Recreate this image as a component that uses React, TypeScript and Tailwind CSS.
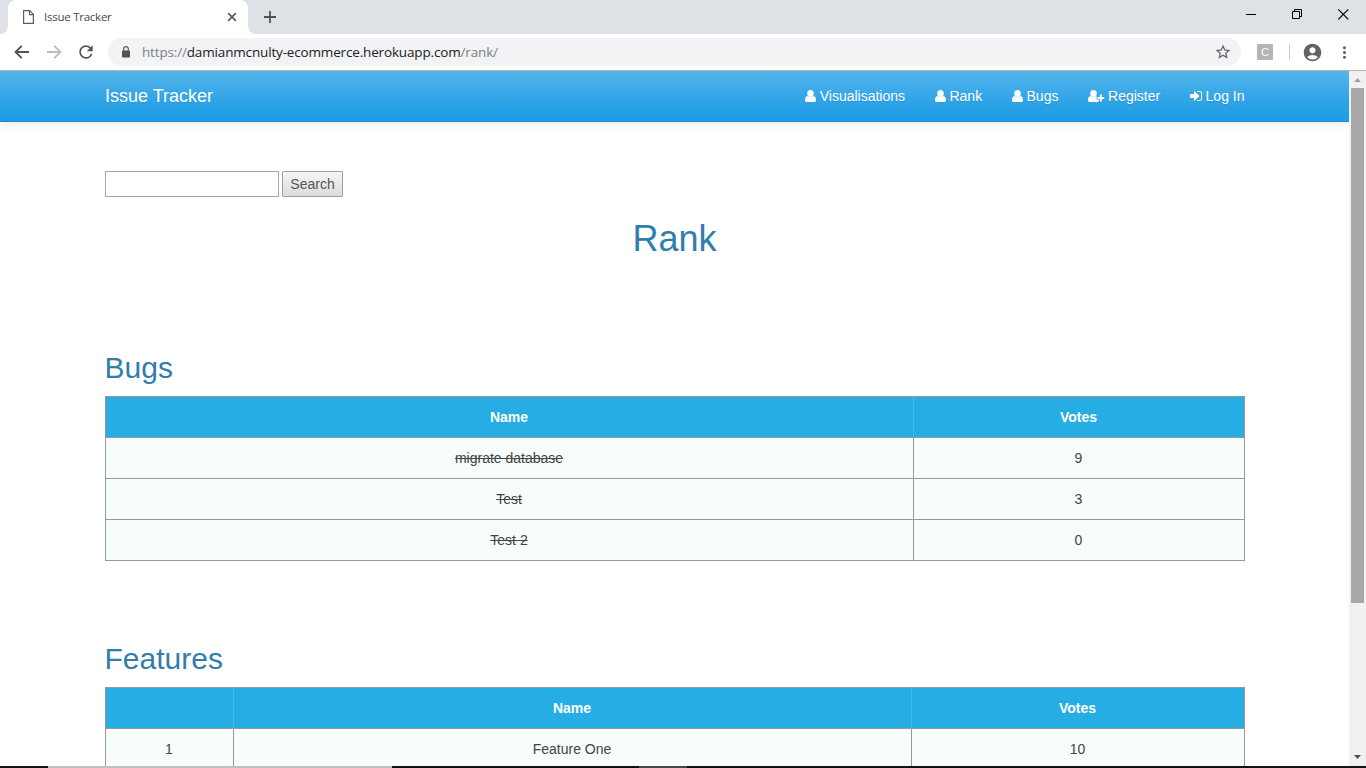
import { MdAccountCircle, MdLogin, MdMoreVert, MdRefresh, MdStarBorder } from "react-icons/md";

const PERSON =
  "M5.500.900a3.300 3.500 0 010 7a3.300 3.500 0 010-7zM2.500 7C.6 7.300 0 9.200 0 11.200C0 12.400.7 13 1.700 13H9.300C10.300 13 11 12.400 11 11.200C11 9.200 10.400 7.300 8.500 7C7 8.600 4 8.600 2.500 7Z";
const PERSON_PLUS =
  "M5.500.900a3.300 3.500 0 010 7a3.300 3.500 0 010-7zM2.500 7C.6 7.300 0 9.200 0 11.200C0 12.400.7 13 1.700 13H9.300Q10.400 13 10.900 12.300V10.400H9Q8.600 10.300 8.600 9.900V7.600Q8.600 7.200 8.900 7.100L8.500 7C7 8.600 4 8.600 2.500 7ZM11.900 5.600h2v2.400h2.300v2h-2.300v2.400h-2v-2.400h-2.400v-2h2.400z";
const SIGN_IN =
  "M1184 896q0 26-19 45l-544 544q-19 19-45 19t-45-19-19-45v-288h-448q-26 0-45-19t-19-45v-384q0-26 19-45t45-19h448v-288q0-26 19-45t45-19 45 19l544 544q19 19 19 45zm352-352v704q0 119-84.5 203.5t-203.5 84.5h-320q-13 0-22.5-9.5t-9.5-22.5q0-4-1-20t-.5-26.5 3-23.5 10-19.5 20.5-6.5h320q66 0 113-47t47-113v-704q0-66-47-113t-113-47h-312l-11.5-1-11.5-3-8-5.5-7-9-2-13.5q0-4-1-20t-.5-26.5 3-23.5 10-19.5 20.5-6.5h320q119 0 203.5 84.5t84.5 203.5z";

const links = [
  { label: "Visualisations", d: PERSON, w: 11, box: "0 0 11 14" },
  { label: "Rank", d: PERSON, w: 11, box: "0 0 11 14" },
  { label: "Bugs", d: PERSON, w: 11, box: "0 0 11 14" },
  { label: "Register", d: PERSON_PLUS, w: 16.2, box: "0 0 16.2 14" },
  { label: "Log In", d: SIGN_IN, w: 12, box: "0 0 1536 1792" },
];

const bugs = [
  { name: "migrate database", votes: 9 },
  { name: "Test", votes: 3 },
  { name: "Test 2", votes: 0 },
];

const th = "h-[41px] border-b border-b-[#999] bg-[#26ade4] p-0 pr-px font-bold text-white";
const thMid = "border-r border-r-[#48b9e8]";
const td = "h-[41px] border-b border-r border-[#999] bg-[#f7fdfa] p-0 pr-px";

function TabStrip() {
  return (
    <div className="flex h-[34px] shrink-0 bg-[#dee1e6]">
      <div className="flex w-2 items-end bg-white">
        <div className="h-full w-2 rounded-br-lg bg-[#dee1e6]" />
      </div>
      <div className="bg-[#dee1e6]">
        <div className="flex h-[34px] w-[240px] items-center rounded-t-lg bg-white pr-[11px] pl-[15px]">
          <svg width="11" height="14" viewBox="0 0 11 14" fill="none" stroke="#5a5d61" strokeWidth="1.2">
            <path d="M.6.6H6.8L10.4 4.4V13.4H.6zM6.5.6V4.7H10.4" />
          </svg>
          <span className="ml-[10px] flex-1 whitespace-nowrap font-['Open_Sans',sans-serif] text-[11.5px] tracking-[-0.25px] text-[#45494d]">Issue Tracker</span>
          <svg width="10" height="10" viewBox="0 0 10 10" stroke="#5a5d61" strokeWidth="1.7">
            <path d="M1.200 1.200l7.600 7.600M8.800 1.200l-7.600 7.600" />
          </svg>
        </div>
      </div>
      <div className="flex w-2 bg-white">
        <div className="h-full w-2 rounded-bl-lg bg-[#dee1e6]" />
      </div>
      <svg className="mt-[11px] ml-2" width="12" height="12" viewBox="0 0 12 12" stroke="#505357" strokeWidth="1.8">
        <path d="M6 0v12M0 6h12" />
      </svg>
      <svg className="mt-2 ml-auto" width="120" height="13" viewBox="0 0 120 13" fill="none" stroke="#000">
        <path d="M0 6.500h10M46.500 3.500h7v7h-7zM48.500 3.500v-2h7v7h-2" />
        <path d="M92.300 1.300l10 10M102.300 1.300l-10 10" strokeWidth="1.2" />
      </svg>
    </div>
  );
}

function Toolbar() {
  return (
    <div className="flex h-9 shrink-0 items-center text-[#5f6368]">
      <svg className="ml-[14px]" width="15" height="14" viewBox="0 0 15 14" fill="none" stroke="#505357" strokeWidth="1.9">
        <path d="M15 7H2M7.700.800L1.500 7l6.200 6.200" />
      </svg>
      <svg className="ml-[18px]" width="15" height="14" viewBox="0 0 15 14" fill="none" stroke="#babcbe" strokeWidth="1.9">
        <path d="M0 7h13M7.300.800L13.500 7l-6.200 6.200" />
      </svg>
      <MdRefresh className="ml-[14px] text-[#505357]" size={20} />
      <div className="ml-3 flex h-7 w-[1133px] items-center rounded-full bg-[#f1f3f4] pr-[9px] pl-[11px]">
        <svg className="ml-[3px]" width="8" height="12" viewBox="0 0 8 12">
          <path d="M1.700 5V3a2.300 2.300 0 014.600 0v2" fill="none" stroke="#5a5d61" strokeWidth="1.2" />
          <rect y="4.500" width="8" height="7" rx="0.8" fill="#505357" />
        </svg>
        <span className="ml-3 flex-1 whitespace-nowrap pt-px font-['Open_Sans',sans-serif] text-[13.5px] tracking-[-0.16px] text-[#7d8185]">
          https://<span className="text-[#202124]">damianmcnulty-ecommerce.herokuapp.com</span>/rank/
        </span>
        <MdStarBorder size={18} />
      </div>
      <div className="ml-4 flex size-4 items-center justify-center rounded-[1px] bg-[#b5b5b5] font-['Liberation_Sans',sans-serif] text-[11px] text-white">C</div>
      <div className="ml-4 h-4 w-px bg-[#ced0d3]" />
      <MdAccountCircle className="ml-3" size={21} />
      <MdMoreVert className="ml-3" size={19} />
    </div>
  );
}

function Scrollbar() {
  return (
    <div className="flex w-[17px] shrink-0 flex-col items-center bg-[#f1f1f1]">
      <svg className="shrink-0" width="17" height="17" viewBox="0 0 17 17" fill="#a3a3a3">
        <path d="M5 11l3.500-4 3.500 4z" />
      </svg>
      <div className="h-[515px] w-[13px] shrink-0 bg-[#a8a8a8]" />
      <svg className="mt-auto shrink-0" width="17" height="17" viewBox="0 0 17 17" fill="#505050">
        <path d="M5 6l3.500 4L12 6z" />
      </svg>
    </div>
  );
}

export default function App() {
  return (
    <div className="flex h-[768px] w-[1366px] flex-col overflow-hidden bg-white">
      <TabStrip />
      <Toolbar />
      <div className="h-px shrink-0 bg-[#b3b5b6]" />
      <div className="flex min-h-0 flex-1 font-['Liberation_Sans',Arial,sans-serif] text-[14px] leading-5 text-[#444]">
        <main className="w-[1349px] overflow-hidden">
          <nav className="flex h-[51px] items-center border-b border-[#178acc] bg-[linear-gradient(#54b4eb,#2fa4e7_60%,#1d9ce5)] pr-[104.5px] pl-[105px] text-white shadow-[0_1px_10px_rgba(0,0,0,0.1)] [text-shadow:0_1px_0_rgba(0,0,0,0.1)]">
            <span className="text-[18px]">Issue Tracker</span>
            <div className="ml-auto flex gap-[30px]">
              {links.map((l) => (
                <a key={l.label} className="flex items-center gap-[3.4px] whitespace-nowrap">
                  <svg className="overflow-visible" height="14" width={l.w} viewBox={l.box} fill="#fff">
                    <path d={l.d} />
                  </svg>
                  {l.label}
                </a>
              ))}
            </div>
          </nav>
          <div className="w-[1245px] pt-[49px] pl-[105px]">
            <form className="flex gap-[3px]">
              <input className="h-[26px] w-[174px] border border-[#a6a6a6] bg-white" />
              <button type="button" className="h-[26px] w-[61px] rounded-[1px] border border-[#a0a0a0] bg-linear-to-b from-[#f6f6f6] to-[#dcdcdc] text-[14px] text-[#555]">Search</button>
            </form>
            <h1 className="mt-[22px] pr-px text-center text-[36px] leading-10 text-[#317eac]">Rank</h1>
            <h2 className="mt-[92px] -ml-[0.5px] text-[30px] leading-[33px] text-[#317eac]">Bugs</h2>
            <table className="mt-[12px] w-[1140px] table-fixed border-separate border-spacing-0 border-t border-l border-[#999] text-center">
              <thead>
                <tr>
                  <th className={`${th} ${thMid} w-[808px]`}>Name</th>
                  <th className={`${th} border-r border-r-[#999]`}>Votes</th>
                </tr>
              </thead>
              <tbody>
                {bugs.map((b) => (
                  <tr key={b.name}>
                    <td className={td}><del>{b.name}</del></td>
                    <td className={td}>{b.votes}</td>
                  </tr>
                ))}
              </tbody>
            </table>
            <h2 className="mt-[81px] -ml-[0.5px] text-[30px] leading-[33px] text-[#317eac]">Features</h2>
            <table className="mt-[12px] w-[1140px] table-fixed border-separate border-spacing-0 border-t border-l border-[#999] text-center">
              <thead>
                <tr>
                  <th className={`${th} ${thMid} w-[128px]`} />
                  <th className={`${th} ${thMid} w-[678px]`}>Name</th>
                  <th className={`${th} border-r border-r-[#999]`}>Votes</th>
                </tr>
              </thead>
              <tbody>
                <tr>
                  <td className={td}>1</td>
                  <td className={td}>Feature One</td>
                  <td className={td}>10</td>
                </tr>
              </tbody>
            </table>
          </div>
        </main>
        <Scrollbar />
      </div>
      <div className="flex h-0.5 shrink-0 bg-[#111315]">
        <div className="ml-12 w-[344px] bg-[#c0c0c0]" />
        <div className="ml-[247px] w-12 bg-[#454749]" />
      </div>
    </div>
  );
}
